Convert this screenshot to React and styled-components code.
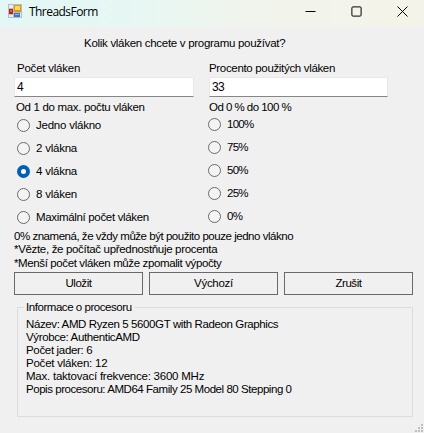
import React from "react";
import styled, { createGlobalStyle } from "styled-components";

const GlobalStyle = createGlobalStyle`
  * { box-sizing: border-box; }
  body { margin: 0; overflow: hidden; background: #f0f0f0; }
`;

const Window = styled.main`
  display: flex;
  flex-direction: column;
  position: relative;
  width: 424px;
  height: 433px;
  background: #f0f0f0;
  color: #000;
  font: 11.5px/13px "Liberation Sans", Arial, sans-serif;
  white-space: nowrap;
`;

const TitleBar = styled.header`
  display: flex;
  align-items: center;
  height: 27px;
  padding: 0 16px 5px 8px;
  background: linear-gradient(90deg, #e3f7f6 0%, #e6f7f3 30%, #f1f4ec 60%, #f4f3ea 100%);
`;

const Title = styled.h1`
  flex: 1;
  margin: 2px 0 0 7px;
  font: 400 12px/16px "Open Sans", sans-serif;
  letter-spacing: -0.55px;
`;

const Controls = styled.div`
  display: flex;
  gap: 35px;
`;

const Text = styled.span`
  letter-spacing: ${(p) => (p.$ls || 0) - 0.23}px;
`;

const Question = styled.p`
  margin: 10px 0 0 84px;
`;

const Columns = styled.section`
  display: grid;
  grid-template-columns: 180px 179px;
  column-gap: 15px;
  margin: 12px 0 0 14px;
`;

const Column = styled.div`
  display: flex;
  flex-direction: column;
`;

const Label = styled.label`
  padding-left: ${(p) => p.$indent}px;
`;

const Input = styled.input`
  height: 20px;
  margin: 2px 0 4px;
  padding: 0 0 1px 2px;
  border: 1px solid #e8e8e8;
  border-bottom-color: #868686;
  border-radius: 0;
  outline: none;
  background: #fff;
  color: #000;
  font: 12px/16px "Liberation Sans", Arial, sans-serif;
  letter-spacing: -0.6px;
`;

const Options = styled.div`
  display: flex;
  flex-direction: column;
  gap: 10px;
  margin: ${(p) => p.$top}px 0 0 ${(p) => p.$indent}px;
`;

const Option = styled.label`
  display: flex;
  align-items: center;
  gap: 6px;
  height: 13px;
`;

const Radio = styled.span`
  width: 13px;
  height: 13px;
  border: ${(p) => (p.$checked ? "4px solid #005fb8" : "1px solid #6a6a6a")};
  border-radius: 50%;
  background: ${(p) => (p.$checked ? "#fff" : "#f4f4f4")};
`;

const Notes = styled.section`
  display: grid;
  grid-template-rows: 13px 14px 13px;
  margin: 6px 0 0 14px;
`;

const Buttons = styled.div`
  display: flex;
  gap: 6px;
  margin: 2px 0 0 14px;
`;

const Button = styled.button`
  width: 129px;
  height: 23px;
  padding: 0;
  border: 1px solid #696969;
  border-radius: 0;
  background: #f0f0f0;
  color: #000;
  font: inherit;
`;

const Group = styled.fieldset`
  width: 396px;
  height: 116px;
  margin: 6px 0 0 17px;
  padding: 4px 0 0 8px;
  border: 1px solid #dcdcdc;
`;

const Legend = styled.legend`
  margin-left: -2px;
  padding: 0 3px 0 2px;
`;

const InfoLine = styled.div`
  height: 13px;
`;

const Grip = styled.svg`
  position: absolute;
  right: 0;
  bottom: 0;
`;

const threadOptions = [
  { text: "Jedno vlákno" },
  { text: "2 vlákna" },
  { text: "4 vlákna", checked: true },
  { text: "8 vláken" },
  { text: "Maximální počet vláken", ls: -0.1 },
];
const percentOptions = ["100%", "75%", "50%", "25%", "0%"];
const notes = [
  ["0% znamená, že vždy může být použito pouze jedno vlákno", -0.24],
  ["*Vězte, že počítač upřednostňuje procenta", -0.1],
  ["*Menší počet vláken může zpomalit výpočty", -0.15],
];
const info = [
  ["Název: AMD Ryzen 5 5600GT with Radeon Graphics", -0.16],
  ["Výrobce: AuthenticAMD", -0.14],
  ["Počet jader: 6", -0.1],
  ["Počet vláken: 12", 0],
  ["Max. taktovací frekvence: 3600 MHz", 0],
  ["Popis procesoru: AMD64 Family 25 Model 80 Stepping 0", -0.22],
];

function FormIcon() {
  return (
    <svg width="14" height="14" viewBox="0 0 14 14" shapeRendering="crispEdges">
      <rect width="14" height="14" fill="#b9bec2" />
      <path d="M1 1h4v3H1zM1 11h4v2H1zM12 9h1v4h-1z" fill="#e8edf0" />
      <rect x="1" y="5" width="4" height="5" fill="#b3261b" />
      <rect x="2" y="6" width="2" height="2" fill="#e0594a" />
      <rect x="6" y="1" width="7" height="7" fill="#d99a13" />
      <rect x="7" y="2" width="5" height="4" fill="#ffd75a" />
      <rect x="6" y="9" width="6" height="4" fill="#3f72cf" />
      <rect x="7" y="10" width="4" height="1" fill="#8db4f5" />
    </svg>
  );
}

export default function App() {
  return (
    <>
      <GlobalStyle />
      <Window>
        <TitleBar>
          <FormIcon />
          <Title>ThreadsForm</Title>
          <Controls>
            <svg width="11" height="11" viewBox="0 0 11 11">
              <path d="M.5 5.5h10" stroke="#000" />
            </svg>
            <svg width="11" height="11" viewBox="0 0 11 11">
              <rect x=".9" y=".9" width="9.2" height="9.2" rx="1" fill="none" stroke="#000" />
            </svg>
            <svg width="11" height="11" viewBox="0 0 11 11">
              <path d="M.5.5l10 10M10.5.5l-10 10" stroke="#000" />
            </svg>
          </Controls>
        </TitleBar>

        <Question>
          <Text $ls={-0.06}>Kolik vláken chcete v programu používat?</Text>
        </Question>

        <Columns>
          <Column>
            <Label $indent={3}><Text>Počet vláken</Text></Label>
            <Input defaultValue="4" />
            <Label $indent={2}><Text $ls={-0.1}>Od 1 do max. počtu vláken</Text></Label>
            <Options $top={5} $indent={3}>
              {threadOptions.map((o) => (
                <Option key={o.text}>
                  <Radio $checked={o.checked} />
                  <Text $ls={o.ls}>{o.text}</Text>
                </Option>
              ))}
            </Options>
          </Column>
          <Column>
            <Label $indent={0}><Text $ls={-0.1}>Procento použitých vláken</Text></Label>
            <Input defaultValue="33" />
            <Label $indent={0}><Text $ls={-0.3}>Od 0 % do 100 %</Text></Label>
            <Options $top={4} $indent={-1}>
              {percentOptions.map((t) => (
                <Option key={t}>
                  <Radio />
                  <Text $ls={-0.5}>{t}</Text>
                </Option>
              ))}
            </Options>
          </Column>
        </Columns>

        <Notes>
          {notes.map(([t, ls]) => <Text key={t} $ls={ls}>{t}</Text>)}
        </Notes>

        <Buttons>
          <Button><Text $ls={-0.2}>Uložit</Text></Button>
          <Button><Text $ls={-0.05}>Výchozí</Text></Button>
          <Button><Text $ls={-0.2}>Zrušit</Text></Button>
        </Buttons>

        <Group>
          <Legend><Text $ls={-0.22}>Informace o procesoru</Text></Legend>
          {info.map(([t, ls]) => <InfoLine key={t}><Text $ls={ls}>{t}</Text></InfoLine>)}
        </Group>

        <Grip width="9" height="9" viewBox="0 0 9 9" fill="#bfbfbf" shapeRendering="crispEdges">
          <path d="M6 0h2v2H6zM3 3h2v2H3zM6 3h2v2H6zM0 6h2v2H0zM3 6h2v2H3zM6 6h2v2H6z" />
        </Grip>
      </Window>
    </>
  );
}
